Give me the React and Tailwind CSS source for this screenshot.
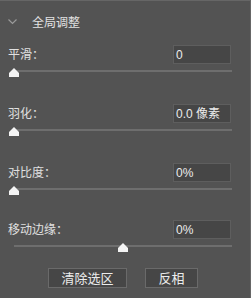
import React from 'react';

const rows = [
  { label: '平滑：', value: '0', pos: 'left-0', gap: 'mb-[32px]' },
  { label: '羽化：', value: '0.0 像素', pos: 'left-0', gap: 'mb-[32px]' },
  { label: '对比度：', value: '0%', pos: 'left-0', gap: 'mb-[30px]' },
  { label: '移动边缘：', value: '0%', pos: 'left-1/2', gap: 'mb-[21px]' },
];

function Thumb({ pos }) {
  return (
    <svg
      className={`absolute top-[-2px] -translate-x-1/2 ${pos}`}
      width="10"
      height="9"
      viewBox="0 0 10 9"
    >
      <path d="M5 0 L10 5 V9 H0 V5 Z" fill="#f4f4f4" />
    </svg>
  );
}

export default function App() {
  return (
    <div className="w-[251px] h-[298px] bg-[#535353] border-t border-r border-[#666] font-['Liberation_Sans','Noto_Sans_CJK_SC',sans-serif] text-[12px] text-[#e0e0e0] overflow-hidden">
      <div className="h-[44px] flex items-start pt-[15px] pl-[8px]">
        <svg width="9" height="6" viewBox="0 0 9 6" className="mt-[3px]">
          <path d="M0.5 0.5 L4.5 4.5 L8.5 0.5" fill="none" stroke="#9a9a9a" strokeWidth="1.2" />
        </svg>
        <span className="ml-[15px] leading-[14px] text-[#e2e2e2]">全局调整</span>
      </div>

      {rows.map((r, i) => (
        <div key={i} className={r.gap}>
          <div className="flex items-center justify-between pl-[8px] pr-[19px]">
            <span className="leading-[14px]">{r.label}</span>
            <div className="w-[58px] h-[19px] bg-[#464646] border border-[#5e5e5e] pl-[2px] flex items-center text-[#ececec] leading-none">
              {r.value}
            </div>
          </div>
          <div className="relative ml-[14px] w-[218px] h-[2px] mt-[6px] bg-[#6e6e6e]">
            <Thumb pos={r.pos} />
          </div>
        </div>
      ))}

      <div className="flex pl-[48px] gap-[18px]">
        <button className="w-[79px] h-[20px] bg-[#464646] border border-[#6a6a6a] text-[13px] text-[#ececec] leading-none">
          清除选区
        </button>
        <button className="w-[53px] h-[20px] bg-[#464646] border border-[#6a6a6a] text-[13px] text-[#ececec] leading-none">
          反相
        </button>
      </div>
    </div>
  );
}
